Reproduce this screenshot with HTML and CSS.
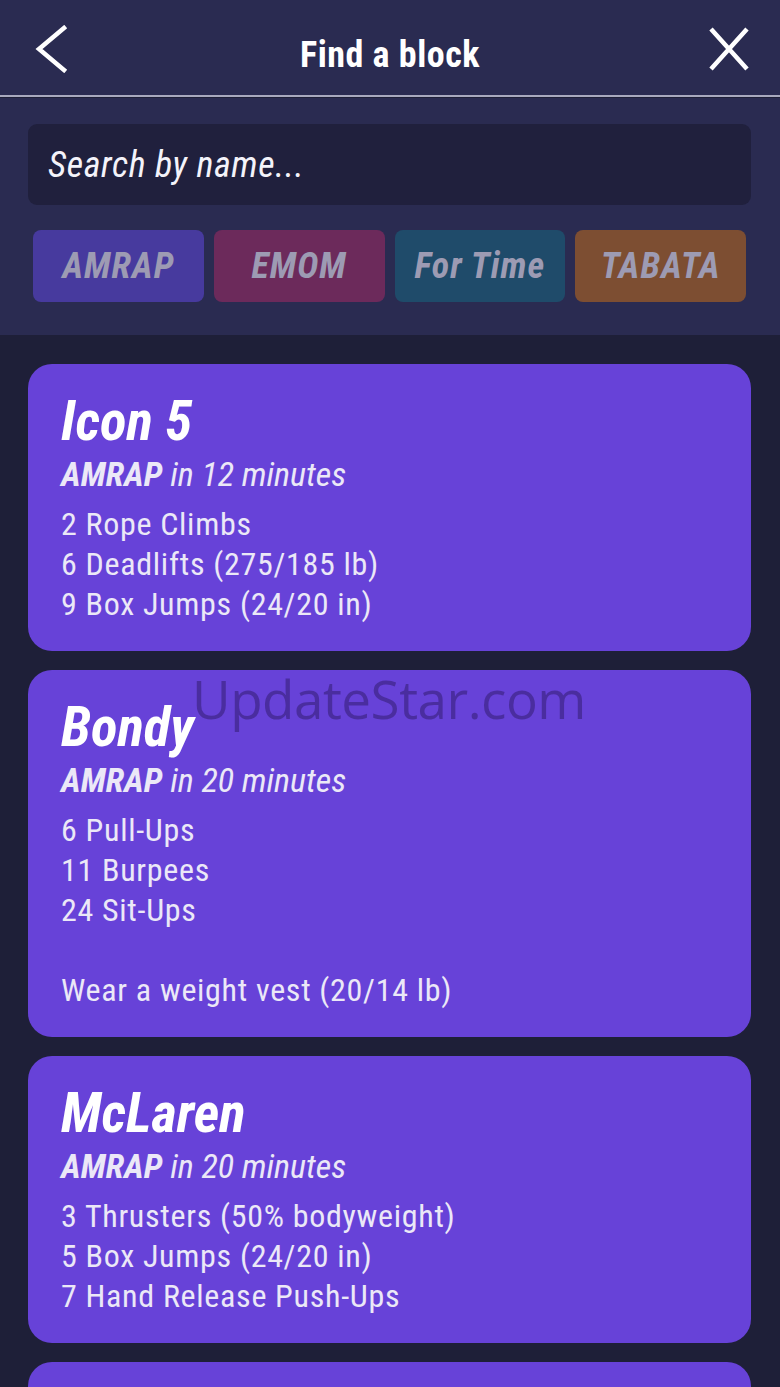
FILE: index.html
```html
<!DOCTYPE html>
<html lang="en">
<head>
<meta charset="utf-8">
<title>Find a block</title>
<link rel="stylesheet" href="styles.css">
</head>
<body>
<div class="app">
  <header class="topbar">
    <button class="icon-btn back" aria-label="Back">
      <svg width="34" height="48" viewBox="0 0 34 48"><path d="M30 3 L5 24 L30 45" fill="none" stroke="#fff" stroke-width="4.5" stroke-linecap="square" stroke-linejoin="miter"/></svg>
    </button>
    <h1 class="title">Find a block</h1>
    <button class="icon-btn close" aria-label="Close">
      <svg width="42" height="44" viewBox="0 0 42 44"><path d="M3 2 L39 42 M39 2 L3 42" fill="none" stroke="#fff" stroke-width="4.5"/></svg>
    </button>
  </header>

  <section class="filters">
    <div class="search">Search by name...</div>
    <div class="chips">
      <div class="chip amrap">AMRAP</div>
      <div class="chip emom">EMOM</div>
      <div class="chip fortime">For Time</div>
      <div class="chip tabata">TABATA</div>
    </div>
  </section>

  <main class="list">
    <article class="card">
      <h2 class="card-title">Icon 5</h2>
      <p class="card-sub"><b>AMRAP</b> in 12 minutes</p>
      <div class="card-body">
        <div>2 Rope Climbs</div>
        <div>6 Deadlifts (275/185 lb)</div>
        <div>9 Box Jumps (24/20 in)</div>
      </div>
    </article>
    <article class="card">
      <h2 class="card-title">Bondy</h2>
      <p class="card-sub"><b>AMRAP</b> in 20 minutes</p>
      <div class="card-body">
        <div>6 Pull-Ups</div>
        <div>11 Burpees</div>
        <div>24 Sit-Ups</div>
        <div>&nbsp;</div>
        <div>Wear a weight vest (20/14 lb)</div>
      </div>
    </article>
    <article class="card">
      <h2 class="card-title">McLaren</h2>
      <p class="card-sub"><b>AMRAP</b> in 20 minutes</p>
      <div class="card-body">
        <div>3 Thrusters (50% bodyweight)</div>
        <div>5 Box Jumps (24/20 in)</div>
        <div>7 Hand Release Push-Ups</div>
      </div>
    </article>
    <article class="card">
      <h2 class="card-title">&nbsp;</h2>
    </article>
  </main>

  <div class="watermark">UpdateStar.com</div>
</div>
</body>
</html>
```
FILE: styles.css
```css
* { box-sizing: border-box; }
html, body { margin: 0; padding: 0; }
body {
  background: #1e1f38;
  font-family: "Roboto Condensed", "Roboto", sans-serif;
  color: #fff;
  overflow: hidden;
}
.app {
  position: relative;
  width: 780px;
  height: 1387px;
  overflow: hidden;
}
.topbar {
  height: 98px;
  background: #2a2b51;
  display: flex;
  align-items: center;
  justify-content: space-between;
  padding: 0 30px 2px 34px;
  border-bottom: 1px solid #1f2038;
  box-shadow: inset 0 -2px 0 #a8a9be;
}
.icon-btn {
  background: none;
  border: 0;
  padding: 0;
  display: flex;
  align-items: center;
  cursor: pointer;
}
.back { margin-top: 2px; }
.close { margin-top: 2px; }
.title {
  margin: 0 0 0 4px;
  font-size: 36px;
  font-weight: 700;
  letter-spacing: 0.5px;
  color: #fff;
  padding-top: 14px;
}
.filters {
  background: #2a2b51;
  padding: 26px 29px 33px 28px;
}
.search {
  height: 81px;
  background: #20203d;
  border-radius: 9px;
  padding: 0 20px;
  display: flex;
  align-items: center;
  font-size: 36px;
  font-style: italic;
  color: #f4f3fa;
  letter-spacing: 0.6px;
}
.chips {
  display: flex;
  gap: 10px;
  margin-top: 25px;
  padding: 0 5px;
}
.chip {
  flex: 1;
  height: 72px;
  border-radius: 8px;
  display: flex;
  align-items: center;
  justify-content: center;
  font-size: 36px;
  font-weight: 700;
  font-style: italic;
  letter-spacing: 1px;
  color: #9d9bb3;
}
.amrap { background: #473a9e; }
.emom { background: #6c2a5b; }
.fortime { background: #1f4b6a; }
.tabata { background: #7d4e32; }

.list {
  padding: 29px 29px 0 28px;
  display: flex;
  flex-direction: column;
  gap: 19px;
}
.card {
  background: #6742d8;
  border-radius: 24px;
  padding: 26px 33px 27px;
}
.card-title {
  margin: 0;
  font-size: 55px;
  line-height: 62px;
  font-weight: 700;
  font-style: italic;
  color: #fff;
}
.card-sub {
  margin: 2px 0 0;
  font-size: 34px;
  line-height: 40px;
  font-style: italic;
  color: #ebe8f7;
}
.card-sub b { font-weight: 700; }
.card-body {
  margin-top: 10px;
  font-size: 32px;
  line-height: 40px;
  letter-spacing: 0.7px;
  color: #ebe8f7;
}
.watermark {
  position: absolute;
  left: 192px;
  top: 662px;
  font-family: "Open Sans", "DejaVu Sans", sans-serif;
  font-size: 53px;
  color: rgba(40, 20, 90, 0.45);
  pointer-events: none;
  letter-spacing: -0.5px;
}
```
